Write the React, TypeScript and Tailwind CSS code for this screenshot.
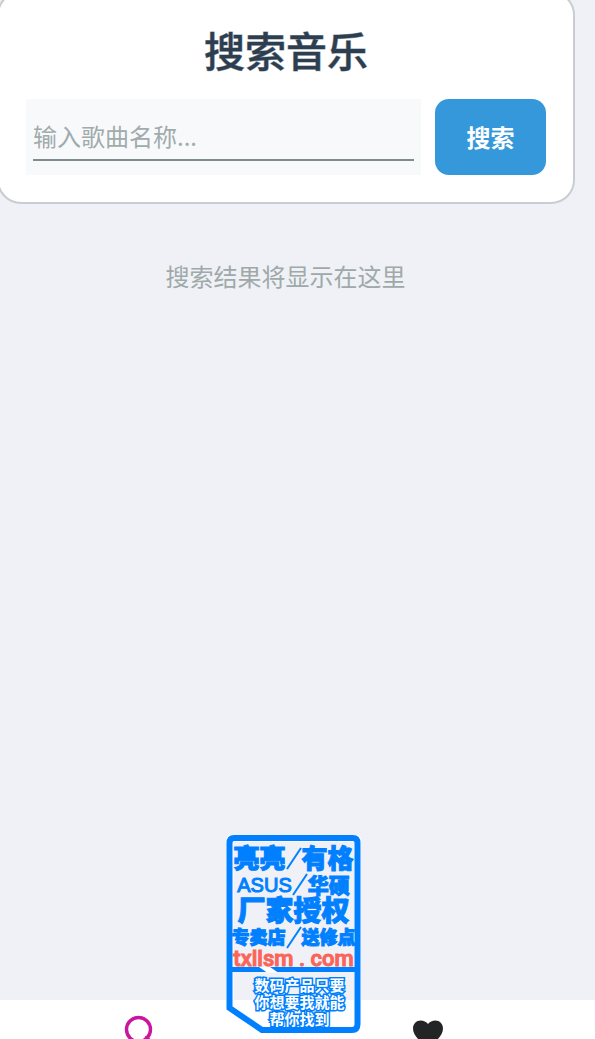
import { useState } from 'react';

const tabs = [
  { id: 'search', label: '搜索' },
  { id: 'favorites', label: '收藏' },
];

function SearchIcon() {
  return (
    <svg width="36" height="36" viewBox="0 0 36 36" fill="none" stroke="#c915a0" strokeWidth="3.4" aria-hidden="true">
      <circle cx="17.500" cy="16.500" r="12" />
      <path d="M25.500 24.500l9 9" strokeLinecap="round" />
    </svg>
  );
}

function HeartIcon() {
  return (
    <svg width="36" height="36" viewBox="0 0 36 36" fill="#222426" aria-hidden="true">
      <path d="M18 35C11 29 3 23 3 15.5 3 11 6.4 7.500 10.6 7.500c3 0 5.800 1.300 7.400 3.400 1.600-2.100 4.400-3.400 7.400-3.400 4.200 0 7.600 3.500 7.600 8C33 23 25 29 18 35z" />
    </svg>
  );
}

function Slash() {
  return (
    <svg className="h-6 w-4 shrink-0" viewBox="0 0 16 24" stroke="#0080ff" strokeWidth="2" aria-hidden="true">
      <path d="M1 22L15 1" />
    </svg>
  );
}

function ShopStamp() {
  return (
    <aside className="pointer-events-none absolute bottom-1.5 left-[226px] h-[198px] w-[135px] font-['Liberation_Sans','Noto_Sans_CJK_SC',sans-serif] font-black text-[#0080ff]">
      <svg className="absolute inset-0" width="135" height="198" viewBox="0 0 135 198" fill="none" aria-hidden="true">
        <path
          d="M8 3H127Q132 3 132 8V189Q132 195 126 195H36L3.5 173V8Q3.5 3 8 3Z"
          stroke="#fff"
          strokeWidth="8"
        />
        <path
          d="M8 3H127Q131.500 3 131.500 8V189Q131.500 195 126 195H36L3.500 173V8Q3.500 3 8 3Z"
          stroke="#0080ff"
          strokeWidth="6"
        />
        <path d="M4 134.500H131" stroke="#0080ff" strokeWidth="5" />
        <path d="M33 132L41 137.500L52 137.500L44 132Z" fill="#fff" />
      </svg>
      <div className="relative flex flex-col items-center pt-2.5 whitespace-nowrap">
        <p className="flex h-7 items-center text-[26px] leading-none [-webkit-text-stroke:1px_#0080ff]">
          亮亮<Slash />有格
        </p>
        <p className="flex h-6 items-center text-[21px] leading-none">
          <span className="text-[20px] font-normal [-webkit-text-stroke:1px_#0080ff]">ASUS</span>
          <Slash />
          <span className="[-webkit-text-stroke:1px_#0080ff]">华硕</span>
        </p>
        <p className="flex h-[30px] items-center text-[28px] leading-none [-webkit-text-stroke:1px_#0080ff]">厂家授权</p>
        <p className="flex h-[22px] items-center text-[18px] leading-none [-webkit-text-stroke:1px_#0080ff]">
          专卖店<Slash />送修点
        </p>
        <p className="flex h-5 items-center font-['Roboto',sans-serif] text-[22px] leading-none font-medium text-[#fa6459] [-webkit-text-stroke:1px_#fa6459]">
          txllsm . com
        </p>
        <div className="mt-2 ml-3 text-center text-[15px] leading-[17px] font-bold text-white [-webkit-text-stroke:3px_#0080ff] [paint-order:stroke_fill]">
          <p>数码产品只要</p>
          <p>你想要我就能</p>
          <p>帮你找到</p>
        </div>
      </div>
    </aside>
  );
}

export default function App() {
  const [query, setQuery] = useState('');
  const [active, setActive] = useState('search');

  return (
    <div className="relative flex h-screen flex-col overflow-hidden bg-[#eff1f6] font-['Noto_Sans_CJK_SC',sans-serif]">
      <main className="flex-1 pr-5">
        <section className="-mt-[9px] -ml-[3px] rounded-3xl border-2 border-[#cacdd0] bg-white p-[27px]">
          <h1 className="mb-5 text-center text-[41px] leading-[59px] font-medium text-[#2c3e50] [-webkit-text-stroke:1px_#2c3e5080]">
            搜索音乐
          </h1>
          <form className="flex gap-3.5" onSubmit={(e) => e.preventDefault()}>
            <div className="h-[76px] min-w-0 flex-1 bg-[#f8f9fb] px-[7px] pt-3">
              <input
                type="text"
                aria-label="歌曲名称"
                placeholder="输入歌曲名称..."
                value={query}
                onChange={(e) => setQuery(e.target.value)}
                className="h-[50px] w-full border-b-2 border-[#7f8c8d] bg-transparent text-2xl text-[#2c3e50] outline-none placeholder:text-[#a0abac]"
              />
            </div>
            <button type="submit" className="h-[76px] w-[111px] rounded-[14px] bg-[#3498db] text-2xl font-bold text-white">
              搜索
            </button>
          </form>
        </section>
        <p className="mt-[54px] -ml-1 text-center text-2xl leading-9 text-[#9fa9aa]">搜索结果将显示在这里</p>
      </main>

      <nav className="flex h-[39px] shrink-0 gap-3 bg-white pr-[29px]">
        {tabs.map((tab) => (
          <button
            key={tab.id}
            type="button"
            aria-label={tab.label}
            onClick={() => setActive(tab.id)}
            aria-pressed={active === tab.id}
            className="flex flex-1 items-start justify-center pt-[13px]"
          >
            {tab.id === 'search' ? <SearchIcon /> : <HeartIcon />}
          </button>
        ))}
      </nav>

      <ShopStamp />
    </div>
  );
}
